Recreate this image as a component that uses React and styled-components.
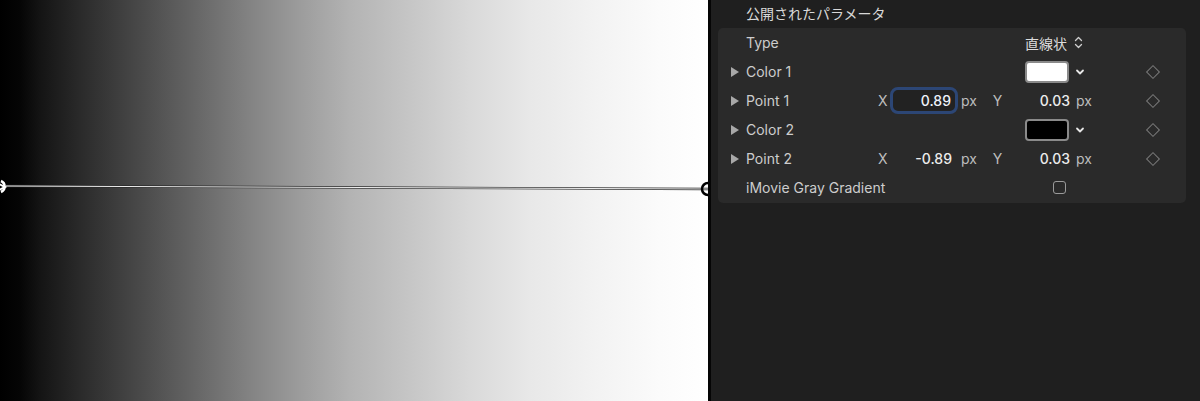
import React from "react";
import styled, { createGlobalStyle } from "styled-components";

const Global = createGlobalStyle`
  html, body { margin: 0; padding: 0; background: #1e1e1e; }
  body { font-family: "Inter", "Noto Sans CJK JP", "Liberation Sans", sans-serif; }
`;

const Page = styled.div`
  display: flex;
  width: 1200px;
  height: 401px;
  overflow: hidden;
`;

const Canvas = styled.div`
  position: relative;
  width: 708px;
  height: 401px;
  flex: none;
  background: linear-gradient(
    to right,
    #000 0px,
    #050505 20px,
    #141414 40px,
    #2a2a2a 80px,
    #444 130px,
    #636363 190px,
    #838383 250px,
    #9c9c9c 300px,
    #b3b3b3 350px,
    #c6c6c6 410px,
    #d9d9d9 470px,
    #e8e8e8 530px,
    #f3f3f3 600px,
    #fbfbfb 660px,
    #ffffff 708px
  );
`;

const Overlay = styled.svg`
  position: absolute;
  left: 0;
  top: 0;
`;

const Divider = styled.div`
  width: 3px;
  flex: none;
  background: #050505;
`;

const Panel = styled.div`
  flex: 1;
  background: #1f1f1f;
  padding: 0 14px 0 7px;
  display: flex;
  flex-direction: column;
`;

const Header = styled.div`
  height: 26px;
  margin-bottom: 2px;
  display: flex;
  align-items: center;
  padding-left: 28px;
  color: #d8d8d8;
  font-size: 14px;
  font-family: "Noto Sans CJK JP", "Inter", sans-serif;
`;

const Card = styled.div`
  background: #2a2a2a;
  border-radius: 5px;
  padding: 0 0 1px 13px;
  display: grid;
  grid-template-columns: 15px 132px 12px 68px 27px 25px 63px 27px 46px 14px 1fr;
  grid-auto-rows: 29px;
  align-items: center;
  color: #cdcdcd;
  font-size: 14px;
`;

const Tri = styled.div`
  grid-column: 1;
  width: 0;
  height: 0;
  border-top: 5px solid transparent;
  border-bottom: 5px solid transparent;
  border-left: 8px solid #a8a8a8;
`;

const Label = styled.div`
  grid-column: 2;
  white-space: nowrap;
`;

const Axis = styled.div`
  grid-column: ${(p) => p.$col};
  color: #bdbdbd;
  text-align: ${(p) => (p.$center ? "center" : "left")};
`;

const Value = styled.div`
  grid-column: ${(p) => p.$col};
  text-align: right;
  color: #ececec;
  font-weight: 500;
  padding-right: ${(p) => p.$pr || 0}px;
`;

const Unit = styled.div`
  grid-column: ${(p) => p.$col};
  color: #bdbdbd;
  padding-left: 3px;
`;

const Field = styled.div`
  grid-column: 4;
  height: 27px;
  box-sizing: border-box;
  border: 3px solid #2c4675;
  border-radius: 8px;
  background: #222;
  color: #eef2fa;
  font-weight: 500;
  text-align: right;
  padding-right: 4px;
  line-height: 21px;
`;

const Popup = styled.div`
  grid-column: 7 / 9;
  padding-left: 15px;
  display: flex;
  align-items: center;
  gap: 7px;
  color: #dcdcdc;
  font-family: "Noto Sans CJK JP", "Inter", sans-serif;
`;

const SwatchWrap = styled.div`
  grid-column: 7 / 10;
  padding-left: 15px;
  display: flex;
  align-items: center;
  gap: 6px;
`;

const Swatch = styled.div`
  width: 44px;
  height: 22px;
  box-sizing: border-box;
  border: 2px solid #8a8a8a;
  border-radius: 4px;
  background: ${(p) => p.$color};
`;

const Diamond = styled.div`
  grid-column: 10;
  width: 8px;
  height: 8px;
  border: 1px solid #7a7a7a;
  transform: rotate(45deg);
  justify-self: center;
`;

const Check = styled.div`
  grid-column: 7 / 9;
  margin-left: 43px;
  width: 13px;
  height: 13px;
  box-sizing: border-box;
  border: 1.5px solid #9a9a9a;
  border-radius: 3px;
`;

const Chevron = () => (
  <svg width="10" height="8" viewBox="0 0 10 8">
    <path d="M2 2.5 L5 5.5 L8 2.5" stroke="#e6e6e6" strokeWidth="1.8" fill="none" strokeLinecap="round" strokeLinejoin="round" />
  </svg>
);

const UpDown = () => (
  <svg width="9" height="13" viewBox="0 0 9 13">
    <path d="M1.5 4.5 L4.5 1.5 L7.5 4.5 M1.5 8.5 L4.5 11.5 L7.5 8.5" stroke="#cfcfcf" strokeWidth="1.3" fill="none" strokeLinecap="round" strokeLinejoin="round" />
  </svg>
);

export default function App() {
  return (
    <>
      <Global />
      <Page>
        <Canvas>
          <Overlay width="708" height="401" viewBox="0 0 708 401">
            <line x1="6" y1="186" x2="708" y2="189" stroke="#2a2a2a" strokeWidth="2.4" />
            <line x1="6" y1="186" x2="708" y2="189" stroke="#ededed" strokeWidth="1" />
            <path d="M1 181 A6 6 0 0 1 1 192" stroke="#fff" strokeWidth="2.5" fill="none" />
            <path d="M-1 184 L5 187 L-1 190" stroke="#fff" strokeWidth="2" fill="none" />
            <circle cx="708" cy="189" r="6" stroke="#000" strokeWidth="2.5" fill="none" />
          </Overlay>
        </Canvas>
        <Divider />
        <Panel>
          <Header>公開されたパラメータ</Header>
          <Card>
            <Label>Type</Label>
            <Popup>
              直線状 <UpDown />
            </Popup>

            <Tri />
            <Label>Color 1</Label>
            <SwatchWrap>
              <Swatch $color="#ffffff" />
              <Chevron />
            </SwatchWrap>
            <Diamond />

            <Tri />
            <Label>Point 1</Label>
            <Axis $col={3}>X</Axis>
            <Field>0.89</Field>
            <Unit $col={5}>px</Unit>
            <Axis $col={6} $center>Y</Axis>
            <Value $col={7} $pr={3}>0.03</Value>
            <Unit $col={8}>px</Unit>
            <Diamond />

            <Tri />
            <Label>Color 2</Label>
            <SwatchWrap>
              <Swatch $color="#000000" />
              <Chevron />
            </SwatchWrap>
            <Diamond />

            <Tri />
            <Label>Point 2</Label>
            <Axis $col={3}>X</Axis>
            <Value $col={4} $pr={6}>-0.89</Value>
            <Unit $col={5}>px</Unit>
            <Axis $col={6} $center>Y</Axis>
            <Value $col={7} $pr={3}>0.03</Value>
            <Unit $col={8}>px</Unit>
            <Diamond />

            <Label>iMovie Gray Gradient</Label>
            <Check />
          </Card>
        </Panel>
      </Page>
    </>
  );
}
